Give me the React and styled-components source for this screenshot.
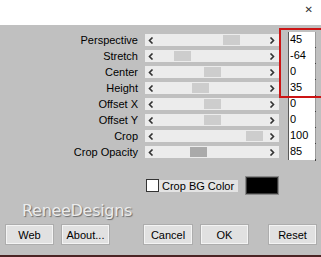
import React from "react";
import styled, { createGlobalStyle } from "styled-components";

const Global = createGlobalStyle`
  html, body { margin: 0; padding: 0; background: #ffffff; }
  body { font-family: "Liberation Sans", Arial, sans-serif; }
  * { box-sizing: border-box; }
`;

const Frame = styled.div`
  position: relative;
  width: 321px;
  height: 257px;
  display: flex;
  flex-direction: column;
  overflow: hidden;
`;

const TitleBar = styled.div`
  height: 25px;
  background: #ffffff;
  display: flex;
  justify-content: flex-end;
  align-items: flex-start;
  padding: 5px 8px 0 0;
`;

const Close = styled.span`
  font-family: "DejaVu Sans", sans-serif;
  font-size: 10px;
  color: #333;
  line-height: 10px;
`;

const Panel = styled.div`
  flex: 1;
  background: #c0c0c0;
  display: flex;
  flex-direction: column;
  padding-top: 7px;
`;

const Rows = styled.div`
  display: flex;
  flex-direction: column;
`;

const Row = styled.div`
  display: grid;
  grid-template-columns: 138px 134px 30px;
  column-gap: 7px;
  height: 16px;
  align-items: center;
  & > :nth-child(3) { margin-left: 2px; }
`;

const Label = styled.div`
  text-align: right;
  font-size: 11px;
  color: #000;
  line-height: 16px;
  white-space: nowrap;
`;

const Track = styled.div`
  position: relative;
  height: 12px;
  background: #ececec;
  display: flex;
  align-items: center;
  justify-content: space-between;
  padding: 0 4px 0 3px;
`;

const Arrow = styled.svg`
  width: 6px;
  height: 7px;
  position: relative;
  z-index: 1;
`;

const Thumb = styled.div`
  position: absolute;
  top: 1px;
  width: 17px;
  height: 10px;
  background: ${(p) => (p.$dark ? "#aaaaaa" : "#cdcdcd")};
`;

const Value = styled.div`
  height: 16px;
  background: #ffffff;
  border-left: 1px solid #5a5a5a;
  border-right: 1px solid #9a9a9a;
  font-size: 11px;
  line-height: 14px;
  padding-left: 1px;
  color: #000;
  position: relative;
  &::after {
    content: "";
    position: absolute;
    right: -1px;
    bottom: -1px;
    width: 1px;
    height: 2px;
    background: #404040;
  }
`;

const ColorRow = styled.div`
  display: flex;
  align-items: center;
  margin-top: 16px;
  padding-left: 146px;
  height: 19px;
`;

const Check = styled.div`
  width: 13px;
  height: 13px;
  background: #fff;
  border: 1px solid #333;
`;

const CheckLabel = styled.div`
  margin-left: 0px;
  height: 12px;
  width: 79px;
  background: #e3e3e3;
  font-size: 11px;
  line-height: 12px;
  padding-left: 3px;
  color: #000;
`;

const Swatch = styled.div`
  margin-left: 7px;
  width: 34px;
  height: 19px;
  background: #000;
  border: 1px solid #8a8a8a;
  box-shadow: inset 0 0 0 1px #3a3a3a;
`;

const Brand = styled.div`
  margin-top: 5px;
  padding-left: 22px;
  height: 22px;
  font-family: "DejaVu Sans", Verdana, sans-serif;
  font-size: 16px;
  line-height: 22px;
  color: #ececec;
  text-shadow: 1px 1px 1px #6a6a6a;
  letter-spacing: -0.3px;
`;

const Buttons = styled.div`
  display: flex;
  margin-top: 2px;
  padding-left: 5px;
  height: 21px;
`;

const Button = styled.button`
  width: ${(p) => p.$w || 49}px;
  height: 21px;
  margin-left: ${(p) => p.$gap || 0}px;
  padding: 0;
  background: #e1e1e1;
  border: 1px solid #adadad;
  box-shadow: inset 0 0 0 1px #f4f4f4;
  font-family: "Liberation Sans", Arial, sans-serif;
  font-size: 11px;
  color: #000;
`;

const BottomLine = styled.div`
  height: 2px;
  background: #4b2424;
`;

const Highlight = styled.div`
  position: absolute;
  left: 279px;
  top: 28px;
  width: 44px;
  height: 70px;
  border: 2px solid #cc1414;
  pointer-events: none;
`;

const rows = [
  { label: "Perspective", value: "45", thumb: 223 },
  { label: "Stretch", value: "-64", thumb: 174 },
  { label: "Center", value: "0", thumb: 204 },
  { label: "Height", value: "35", thumb: 192 },
  { label: "Offset X", value: "0", thumb: 204 },
  { label: "Offset Y", value: "0", thumb: 204 },
  { label: "Crop", value: "100", thumb: 246 },
  { label: "Crop Opacity", value: "85", thumb: 190, dark: true },
];

const Left = () => (
  <Arrow viewBox="0 0 6 7">
    <path d="M4.5 0.5 L1.5 3.5 L4.5 6.5" stroke="#333" strokeWidth="1.6" fill="none" />
  </Arrow>
);
const Right = () => (
  <Arrow viewBox="0 0 6 7">
    <path d="M1.5 0.5 L4.5 3.5 L1.5 6.5" stroke="#333" strokeWidth="1.6" fill="none" />
  </Arrow>
);

export default function App() {
  return (
    <>
      <Global />
      <Frame>
        <TitleBar>
          <Close>✕</Close>
        </TitleBar>
        <Panel>
          <Rows>
            {rows.map((r) => (
              <Row key={r.label}>
                <Label>{r.label}</Label>
                <Track>
                  <Left />
                  <Thumb $dark={r.dark} style={{ left: r.thumb - 145 }} />
                  <Right />
                </Track>
                <Value>{r.value}</Value>
              </Row>
            ))}
          </Rows>
          <ColorRow>
            <Check />
            <CheckLabel>Crop BG Color</CheckLabel>
            <Swatch />
          </ColorRow>
          <Brand>ReneeDesigns</Brand>
          <Buttons>
            <Button>Web</Button>
            <Button $gap={7}>About...</Button>
            <Button $gap={33} $w={50}>Cancel</Button>
            <Button $gap={7}>OK</Button>
            <Button $gap={19}>Reset</Button>
          </Buttons>
        </Panel>
        <BottomLine />
        <Highlight />
      </Frame>
    </>
  );
}
